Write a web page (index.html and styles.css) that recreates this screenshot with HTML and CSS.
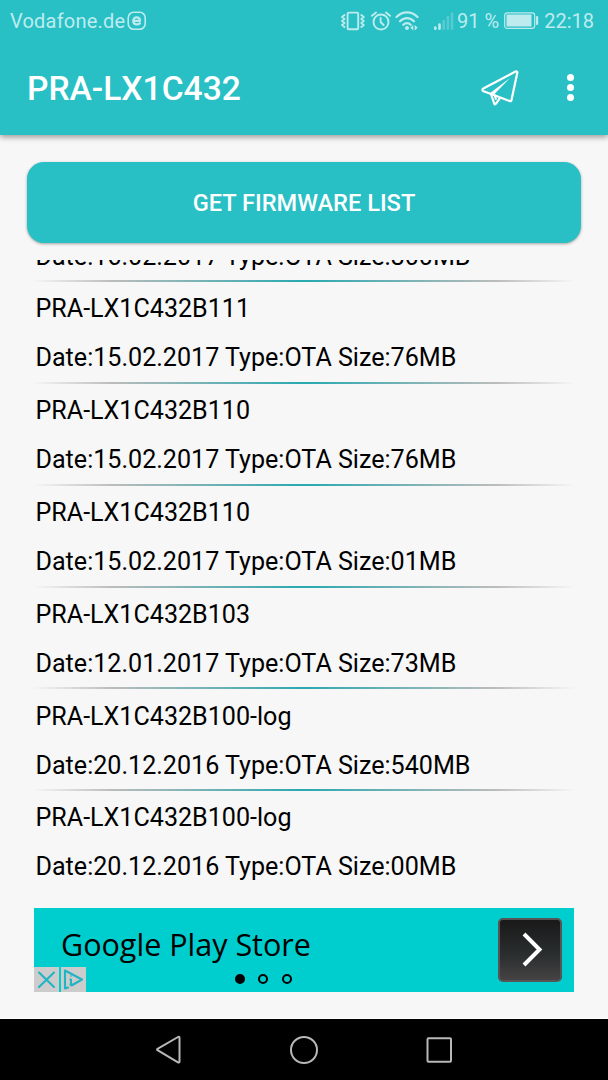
FILE: index.html
```html
<!DOCTYPE html>
<html lang="en">
<head>
  <meta charset="UTF-8" />
  <title>PRA-LX1C432</title>
  <link rel="stylesheet" href="styles.css">
</head>

<body>
  <header class="header">
    <div class="statusbar">
      <span class="carrier">Vodafone.de</span>
      <svg class="edge" width="20" height="20" viewBox="0 0 20 20">
        <rect x="1.2" y="1.2" width="17" height="17" rx="5.5" />
        <path class="thick" d="M6.3 9.8H13C13 7.3 11.8 6.3 9.7 6.3S6.3 7.5 6.3 9.8C6.3 12.2 7.5 13.4 9.8 13.4C11.2 13.4 12.2 13 12.9 12.2" />
      </svg>
      <div class="status-icons">
        <svg width="26" height="22" viewBox="0 0 26 22">
          <rect class="medium" x="7.6" y="2.6" width="10.6" height="16.6" rx="1" />
          <path class="medium" d="M4.5 5L2 7l2.5 2L2 11l2.5 2L2 15l2.5 2M21.3 5l2.5 2-2.5 2 2.5 2-2.5 2 2.5 2-2.5 2" />
        </svg>
        <svg class="alarm" width="20" height="22" viewBox="0 0 20 22">
          <circle class="medium" cx="10" cy="12" r="7.5" />
          <path class="medium" d="M1 5.8L5 2.500M19 5.800L15 2.500M9.600 8V12l3 3" />
        </svg>
        <svg class="wifi" width="24" height="22" viewBox="0 0 24 22">
          <path class="thick" d="M1.5 7C7.5.8 16.5.8 22.5 7M5 11.3C9 7 15 7 19 11.3M8.3 14.8C10.5 12.5 13.5 12.5 15.7 14.8" />
          <circle class="solid" cx="12" cy="18" r="2" />
          <path class="solid" d="M18.3 15v5.500l-3-2.700zM19.700 15v5.500l3-2.700z" />
        </svg>
        <svg class="signal" width="21" height="22" viewBox="0 0 21 22">
          <path class="bar" d="M2.3 17.5v1.2M6.5 14.5v4.2" />
          <path class="bar off" d="M10.7 11v7.700M14.900 7v11.700M19 3.500v15.200" />
        </svg>
        <span class="percent">91 %</span>
        <svg class="battery" width="35" height="22" viewBox="0 0 35 22">
          <rect class="thin" x=".7" y="2.8" width="30" height="15.5" rx="2.5" />
          <rect class="solid" x="2.5" y="4.5" width="25" height="12" />
          <rect class="solid" x="32" y="6" width="2.2" height="9" rx="1" />
        </svg>
        <span class="clock">22:18</span>
      </div>
    </div>
    <div class="toolbar">
      <h1>PRA-LX1C432</h1>
      <svg class="plane" width="38" height="38" viewBox="0 0 38 38">
        <path d="M34.5 2.5C35.5 2 36.5 2.7 36.3 3.8L30.5 31C30.3 32.2 29.5 32.5 28.5 32L11.5 25.5L2.5 22.3C1 21.5 1 20.5 2.3 19.5Z" />
        <path d="M10 25L13.2 34.5C13.6 35.5 14.2 35.5 14.8 34.8L19 29M13.8 26.5L14.8 30" />
        <path class="fold" d="M9.5 23.8L29 9L12.500 26z" />
      </svg>
      <div class="more"><i></i><i></i><i></i></div>
    </div>
  </header>

  <main class="content">
    <button class="get-list">GET FIRMWARE LIST</button>

    <ul class="firmware">
      <li class="cut"><p>Date:16.02.2017 Type:OTA Size:800MB</p></li>
      <li><p>PRA-LX1C432B111</p><p>Date:15.02.2017 Type:OTA Size:76MB</p></li>
      <li><p>PRA-LX1C432B110</p><p>Date:15.02.2017 Type:OTA Size:76MB</p></li>
      <li><p>PRA-LX1C432B110</p><p>Date:15.02.2017 Type:OTA Size:01MB</p></li>
      <li><p>PRA-LX1C432B103</p><p>Date:12.01.2017 Type:OTA Size:73MB</p></li>
      <li><p>PRA-LX1C432B100-log</p><p>Date:20.12.2016 Type:OTA Size:540MB</p></li>
      <li><p>PRA-LX1C432B100-log</p><p>Date:20.12.2016 Type:OTA Size:00MB</p></li>
    </ul>

    <div class="ad">
      <span class="ad-title">Google Play Store</span>
      <div class="ad-go">
        <svg width="64" height="64" viewBox="0 0 64 64">
          <path d="M26 16L41.5 31.5L26 47" />
        </svg>
      </div>
      <div class="dots"><i class="on"></i><i></i><i></i></div>
      <div class="choices">
        <svg width="25" height="25" viewBox="0 0 25 25"><path d="M5 5.5L20 20M20 5.5L5 20" /></svg>
        <svg width="25" height="25" viewBox="0 0 25 25">
          <path d="M7 20.500L4 21.500V3.500L21 12.500L10.500 18.500" />
          <path class="info" d="M8.500 12.500H10V17.500M8.500 17.500H11.500M10 8.500V9.500" />
        </svg>
      </div>
    </div>
  </main>

  <nav class="navbar">
    <svg width="28" height="30" viewBox="0 0 28 30"><path d="M2.500 15.200Q1.700 14.500 2.500 13.800L23 2Q24.500 1.300 24.500 3V26.500Q24.500 28 23 27.300Z" /></svg>
    <svg width="30" height="30" viewBox="0 0 30 30"><circle cx="15" cy="15" r="13" /></svg>
    <svg width="28" height="30" viewBox="0 0 28 30"><rect x="2.500" y="3.300" width="23.500" height="23.500" rx="1" /></svg>
  </nav>
</body>
</html>
```
FILE: styles.css
```css
* {
  box-sizing: border-box;
}

body {
  margin: 0;
  height: 1080px;
  display: flex;
  flex-direction: column;
  overflow: hidden;
  background-color: #f7f7f7;
  color: #000;
  font-family: Roboto, sans-serif;
}

svg {
  flex: none;
  fill: none;
  stroke-linecap: round;
  stroke-linejoin: round;
}

/* header */
.header {
  height: 135px;
  flex: none;
  background-color: #28bfc5;
  box-shadow: 0 2px 6px rgba(0, 0, 0, 0.4);
}

.statusbar {
  height: 41px;
  padding: 0 14px 0 10px;
  display: flex;
  align-items: center;
  color: #beecee;
  font-size: 20px;
}

.statusbar svg {
  stroke: #beecee;
  stroke-width: 1.6;
}

.statusbar .thick {
  stroke-width: 2.2;
}

.statusbar .medium {
  stroke-width: 1.9;
}

.statusbar .thin {
  stroke-width: 1.2;
}

.statusbar .solid {
  fill: #beecee;
  stroke: none;
}

.statusbar .bar {
  stroke-width: 2.6;
}

.statusbar .off {
  opacity: 0.3;
}

.carrier {
  letter-spacing: 0.2px;
}

.edge {
  margin-left: 2px;
}

.status-icons {
  margin-left: auto;
  display: flex;
  align-items: center;
}

.alarm {
  margin-left: 5px;
}

.wifi {
  margin-left: 4px;
}

.signal {
  margin-left: 14px;
}

.percent {
  margin-left: 3px;
}

.battery {
  margin: 0 5px;
}

.toolbar {
  height: 94px;
  padding: 1px 34px 0 27px;
  display: flex;
  align-items: center;
}

h1 {
  margin: 0;
  flex: 1;
  color: #fff;
  font-size: 33.6px;
  font-weight: 500;
}

.plane {
  margin-bottom: 2px;
  stroke: #fff;
  stroke-width: 2.2;
}

.fold {
  fill: #fff;
  stroke: none;
}

.more {
  margin: 0 0 2px 48px;
  display: flex;
  flex-direction: column;
  gap: 3px;
}

.more i {
  width: 7px;
  height: 7px;
  border-radius: 50%;
  background-color: #fff;
}

/* content */
.content {
  flex: 1;
  padding: 27px 27px 0;
  display: flex;
  flex-direction: column;
}

.get-list {
  height: 81px;
  flex: none;
  padding: 0;
  border: none;
  border-radius: 17px;
  background-color: #28bfc5;
  box-shadow: 0 1px 3px rgba(0, 0, 0, 0.35);
  color: #fff;
  font-family: inherit;
  font-size: 23.6px;
  font-weight: 500;
}

/* scrolled to the end, the first row is cut off */
.firmware {
  height: 631px;
  flex: none;
  margin: 17px 5px 0;
  padding: 0;
  display: flex;
  flex-direction: column;
  justify-content: flex-end;
  overflow: hidden;
  list-style: none;
}

.firmware li {
  height: 101.8px;
  flex: none;
  padding: 4.2px 3.5px 0;
  background: linear-gradient(90deg, transparent, #bbb 15%, #28a9b0 50%, #bbb 85%, transparent) top / 100% 2px no-repeat;
}

.firmware .cut {
  height: 48.6px;
  padding-top: 0;
  background: none;
}

.firmware p {
  margin: 0;
  height: 49px;
  font-size: 25.1px;
  line-height: 49px;
  white-space: nowrap;
}

/* ad banner */
.ad {
  position: relative;
  height: 84px;
  flex: none;
  margin: 17px 7px 0;
  padding: 0 12px 0 27px;
  display: flex;
  align-items: center;
  justify-content: space-between;
  background-color: #00cdce;
}

.ad-title {
  padding-bottom: 13px;
  font-family: "Open Sans", sans-serif;
  font-size: 30.5px;
}

.ad-go {
  width: 64px;
  height: 64px;
  border: 2px solid #555;
  border-radius: 5px;
  background: linear-gradient(#191919, #2b2f30 60%, #454343);
}

.ad-go svg {
  display: block;
  margin: -2px;
  stroke: #fff;
  stroke-width: 4;
  stroke-linecap: butt;
  stroke-linejoin: miter;
}

.dots {
  position: absolute;
  left: 200.5px;
  bottom: 8px;
  display: flex;
  gap: 13.6px;
}

.dots i {
  width: 10px;
  height: 10px;
  border: 2px solid #000;
  border-radius: 50%;
}

.dots .on {
  background-color: #000;
}

.choices {
  position: absolute;
  left: 0;
  bottom: 0;
  display: flex;
  gap: 2px;
}

.choices svg {
  background-color: #ccc;
  stroke: #20b4c4;
  stroke-width: 2.1;
}

.choices .info {
  stroke-width: 2;
  stroke-linecap: butt;
}

/* navigation */
.navbar {
  height: 62px;
  flex: none;
  padding: 1px 155px 0;
  display: flex;
  align-items: center;
  justify-content: space-between;
  border-top: 1px solid #fff;
  background-color: #000;
}

.navbar svg {
  stroke: #b8b8b8;
  stroke-width: 2;
}
```
